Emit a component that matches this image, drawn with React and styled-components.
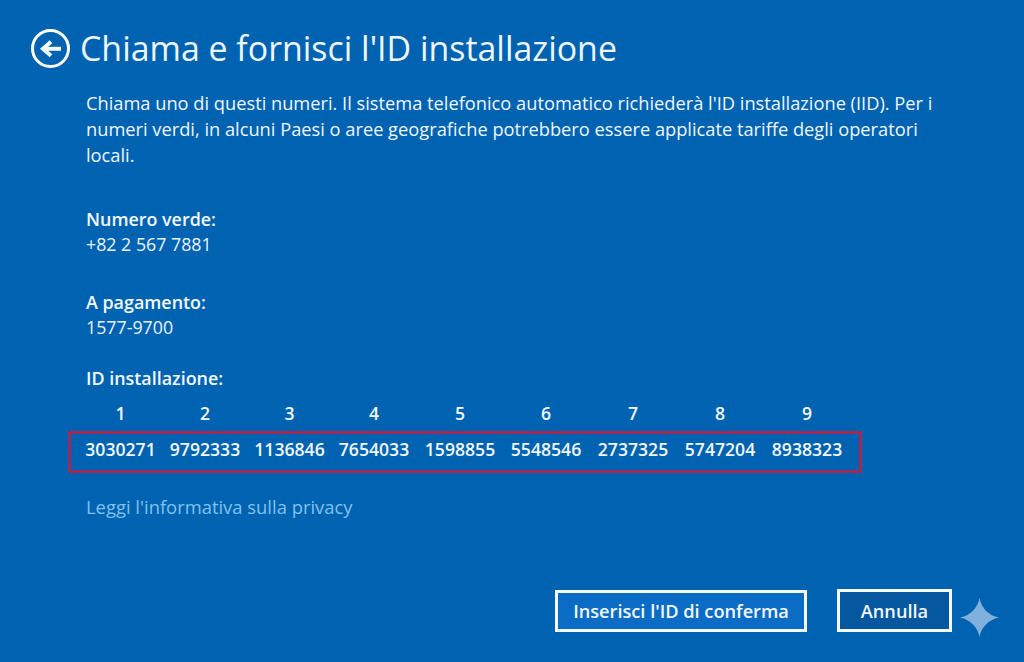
import React from "react";
import styled, { createGlobalStyle } from "styled-components";

const Global = createGlobalStyle`
  html, body { margin: 0; padding: 0; background: #0063b1; }
  body { font-family: "Open Sans", "Noto Sans", "Liberation Sans", sans-serif; color: #fff; }
`;

const COLUMNS = "85px 84px 85px 84px 88px 84px 90px 84px 90px";

const Page = styled.div`
  width: 1024px;
  height: 662px;
  box-sizing: border-box;
  background: #0063b1;
  padding: 29px 0 0 30px;
  display: flex;
  flex-direction: column;
  position: relative;
  overflow: hidden;
`;

const Header = styled.header`
  display: flex;
  align-items: center;
  gap: 10px;
  height: 40px;
`;

const BackButton = styled.div`
  width: 40px;
  height: 40px;
  flex: none;
  display: flex;
`;

const Title = styled.h1`
  margin: -3px 0 0;
  font-size: 33.9px;
  font-weight: 400;
  line-height: 40px;
  color: #eef6fc;
  white-space: nowrap;
`;

const Content = styled.main`
  margin: 21px 0 0 56px;
  display: flex;
  flex-direction: column;
`;

const Intro = styled.p`
  margin: 0;
  width: 860px;
  font-size: 18.25px;
  line-height: 26px;
  color: #f0f7fc;
`;

const Block = styled.section`
  margin-top: ${(p) => p.$top}px;
  display: flex;
  flex-direction: column;
`;

const Label = styled.div`
  font-size: 17.9px;
  font-weight: 600;
  line-height: 25px;
  color: #f4f9fd;
`;

const Value = styled.div`
  font-size: 17.8px;
  line-height: 25px;
  color: #eaf3fa;
`;

const IdGrid = styled.div`
  display: grid;
  grid-template-columns: ${COLUMNS};
  margin: 10px 0 0 -8px;
`;

const IdHead = styled.div`
  text-align: center;
  font-size: 17.6px;
  font-weight: 550;
  line-height: 25px;
  color: #f0f7fc;
`;

const IdBox = styled.div`
  margin: 5px 0 0 -18px;
  width: 794px;
  height: 42px;
  box-sizing: border-box;
  border: 3px solid #a02a55;
  border-radius: 1px;
  display: grid;
  grid-template-columns: ${COLUMNS};
  padding: 0 0 6px 7px;
  align-items: center;
`;

const IdCell = styled.div`
  text-align: center;
  font-size: 17.6px;
  font-weight: 550;
  color: #f2f8fd;
`;

const PrivacyLink = styled.a`
  margin-top: 21px;
  font-size: 18.4px;
  line-height: 26px;
  color: #80c2ee;
`;

const Footer = styled.footer`
  position: absolute;
  right: 72px;
  top: 589px;
  display: flex;
  gap: 30px;
  align-items: flex-start;
`;

const Button = styled.button`
  box-sizing: border-box;
  height: ${(p) => p.$h}px;
  width: ${(p) => p.$w}px;
  margin-top: ${(p) => p.$top || 0}px;
  border: 3px solid #f3f9fd;
  background: ${(p) => p.$bg};
  color: #f2f8fd;
  font-family: inherit;
  font-size: 18.2px;
  font-weight: 600;
  padding: 0;
`;

const Sparkle = styled.svg`
  position: absolute;
  left: 960px;
  top: 598px;
  width: 39px;
  height: 39px;
`;

const ids = ["3030271","9792333","1136846","7654033","1598855","5548546","2737325","5747204","8938323"];

export default function App() {
  return (
    <Page>
      <Global />
      <Header>
        <BackButton>
          <svg viewBox="0 0 40 40" width="40" height="40" fill="none">
            <circle cx="20.5" cy="19.5" r="18" stroke="#fff" strokeWidth="3" />
            <path d="M31 19.8H14" stroke="#f2f8fd" strokeWidth="4" />
            <path d="M21 12.8L13 19.8L21 26.8" stroke="#f2f8fd" strokeWidth="4" />
          </svg>
        </BackButton>
        <Title>Chiama e fornisci l'ID installazione</Title>
      </Header>
      <Content>
        <Intro>
          Chiama uno di questi numeri. Il sistema telefonico automatico richiederà l'ID installazione (IID). Per i numeri verdi, in alcuni Paesi o aree geografiche potrebbero essere applicate tariffe degli operatori locali.
        </Intro>
        <Block $top={39}>
          <Label>Numero verde:</Label>
          <Value>+82 2 567 7881</Value>
        </Block>
        <Block $top={33}>
          <Label>A pagamento:</Label>
          <Value>1577-9700</Value>
        </Block>
        <Block $top={26}>
          <Label>ID installazione:</Label>
          <IdGrid>
            {ids.map((_, i) => <IdHead key={i}>{i + 1}</IdHead>)}
          </IdGrid>
          <IdBox>
            {ids.map((id) => <IdCell key={id}>{id}</IdCell>)}
          </IdBox>
        </Block>
        <PrivacyLink>Leggi l'informativa sulla privacy</PrivacyLink>
      </Content>
      <Footer>
        <Button $w={252} $h={42} $top={1} $bg="#0a6cc4">Inserisci l'ID di conferma</Button>
        <Button $w={115} $h={43} $bg="#0557a0">Annulla</Button>
      </Footer>
      <Sparkle viewBox="0 0 39 39">
        <path d="M19.5 0C21 9 28 17.5 39 19.5C28 21.5 21 30 19.5 39C18 30 11 21.5 0 19.5C11 17.5 18 9 19.5 0Z" fill="#7fb1dc" />
      </Sparkle>
    </Page>
  );
}
